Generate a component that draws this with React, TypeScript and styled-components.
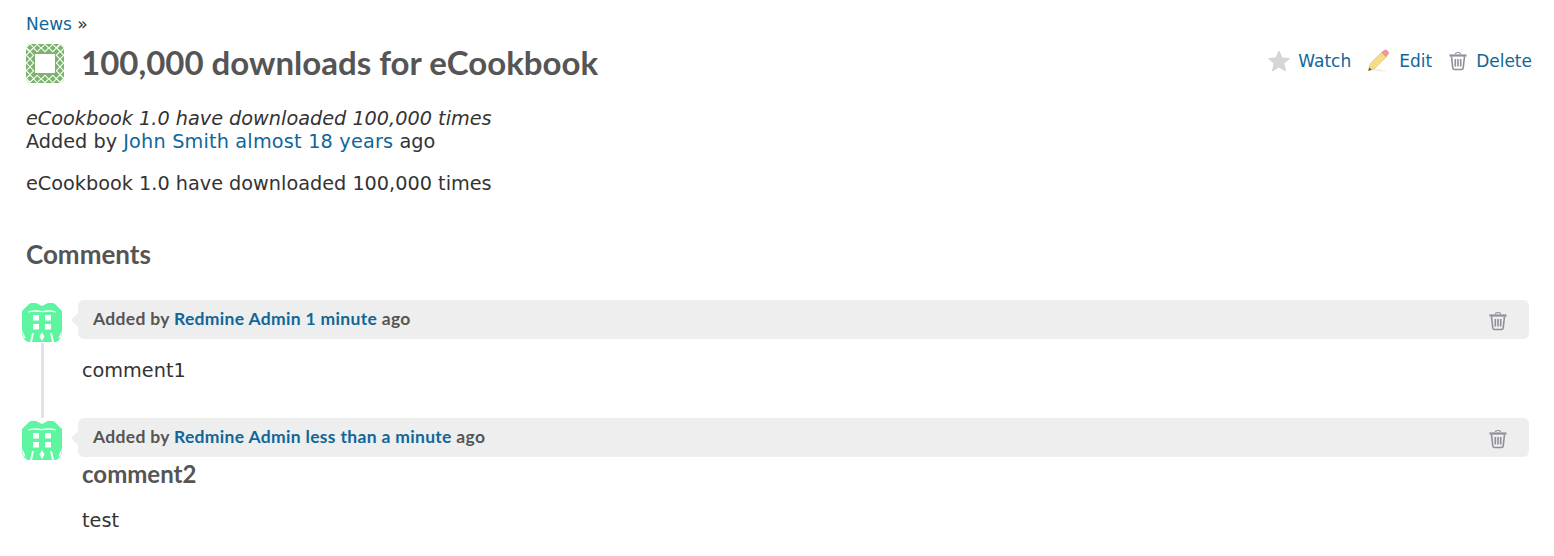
import styled, { createGlobalStyle } from 'styled-components';

const GlobalStyle = createGlobalStyle`
  html, body {
    margin: 0;
    padding: 0;
    background: #fff;
    color: #333;
    font-family: "DejaVu Sans", Verdana, sans-serif;
    font-size: 19.25px;
  }
`;

function IssueAvatar() {
  const dots = [];
  for (let i = 0; i < 5; i++) {
    const p = 3.5 + i * 7.75;
    for (const [x, y] of [[p, 4], [p, 35], [4, p], [34, p]]) {
      dots.push(
        <rect
          key={`${x}-${y}`}
          x={x - 2.6}
          y={y - 2.6}
          width="5.2"
          height="5.2"
          transform={`rotate(45 ${x} ${y})`}
          fill="#7cb36d"
          stroke="#fff"
          strokeWidth="1"
        />,
      );
    }
  }
  return (
    <svg width="38" height="39" viewBox="0 0 38 39">
      <defs>
        <clipPath id="issue-clip">
          <rect width="38" height="39" rx="5" />
        </clipPath>
      </defs>
      <g clipPath="url(#issue-clip)">
        <rect width="38" height="39" fill="#7cb36d" />
        {dots}
        <rect x="9" y="10" width="20" height="19" fill="#fff" />
      </g>
    </svg>
  );
}

function UserAvatar() {
  return (
    <svg width="40" height="40" viewBox="0 0 40 40">
      <path d="M6 0 H34 Q39 1 40 6 V31 Q39 37 34 39 H6 Q1 37 0 31 V6 Q1 1 6 0 Z" fill="#5ef5a0" />
      <path d="M0 8 L7 1 L9 0 H4 L0 4 Z M40 8 L33 1 L31 0 H36 L40 4 Z" fill="#fff" />
      <path d="M14 0 L20 3 L26 0 Z" fill="#fff" />
      <path d="M6 8.5 Q12 6.5 20 8 Q28 6.5 34 8.5 L34 9.5 Q28 8 20 9.3 Q12 8 6 9.5 Z" fill="#fff" />
      <rect x="11" y="12" width="6" height="5.5" fill="#fff" />
      <rect x="23" y="12" width="6" height="5.5" fill="#fff" />
      <rect x="11" y="21" width="6" height="5.5" fill="#fff" />
      <rect x="23" y="21" width="6" height="5.5" fill="#fff" />
      <path d="M20 29 L22.5 33.5 L20 38 L17.5 33.5 Z" fill="#fff" />
      <path d="M10 30 L12 30 L10 39 L8 39 Z M30 30 L28 30 L30 39 L32 39 Z" fill="#fff" />
      <path d="M0 27 L4 36 L1 34 Z M40 27 L36 36 L39 34 Z" fill="#fff" />
    </svg>
  );
}

function StarIcon() {
  return (
    <svg width="22" height="22" viewBox="0 0 22 22">
      <path d="M11 1 L14 8 L21.5 8.6 L15.8 13.4 L17.6 21 L11 17 L4.4 21 L6.2 13.4 L.5 8.6 L8 8 Z" fill="#d6d6d6" stroke="#c4c4c4" strokeWidth="0.6" />
    </svg>
  );
}

function PencilIcon() {
  return (
    <svg width="24" height="24" viewBox="0 0 26 26">
      <path d="M3 23 L9 24 Q18 25 22 24 Q14 21 7 21 Z" fill="#efefef" />
      <path d="M1.5 23.5 L3.5 16 L17 2.5 L22 7.5 L8.5 21 Z" fill="#f5dd85" stroke="#dcc06a" strokeWidth="0.7" />
      <path d="M15.5 4 L18.5 1 Q20 0 21.5 1 L23.5 3 Q24.5 4.5 23 6 L20.5 9 Z" fill="#ee9a9a" />
      <path d="M1.5 23.5 L2.5 20 L5 22.5 Z" fill="#555" />
    </svg>
  );
}

function TrashIcon({ size = 20 }: { size?: number }) {
  return (
    <svg width={size} height={size} viewBox="0 0 20 20" fill="none" stroke="#8f8f9c" strokeWidth="1.6">
      <path d="M1.5 4.5 H18.5" strokeWidth="2.2" />
      <path d="M7.5 3 Q7.5 1.5 10 1.5 Q12.5 1.5 12.5 3" strokeWidth="1.2" />
      <path d="M3.5 5.5 L4.8 17 Q5 18.5 6.5 18.5 H13.5 Q15 18.5 15.2 17 L16.5 5.5" />
      <path d="M7.3 8 V15.5 M10 8 V15.5 M12.7 8 V15.5" />
    </svg>
  );
}

const Page = styled.div`
  padding: 13px 22px 0 26px;
  line-height: 23px;
  box-sizing: border-box;
  height: 556px;
  overflow: hidden;
`;

const Link = styled.a`
  color: #169;
  text-decoration: none;
  cursor: pointer;
`;

const MetaLink = styled(Link)`
  letter-spacing: 0.2px;
`;

const Breadcrumb = styled.div`
  font-size: 17px;
  line-height: 22px;
  color: #333;
`;

const TitleRow = styled.div`
  display: flex;
  align-items: center;
  justify-content: space-between;
  margin-top: 8px;
  height: 39px;
`;

const TitleLeft = styled.div`
  display: flex;
  align-items: center;
  gap: 17px;
`;

const IconWrap = styled.div`
  display: flex;
  margin-top: 2px;
`;

const Title = styled.h2`
  margin: 0;
  font-family: Lato, "DejaVu Sans", sans-serif;
  font-size: 33px;
  font-weight: 700;
  color: #555;
`;

const Actions = styled.div`
  display: flex;
  align-items: center;
  gap: 16px;
  font-size: 17px;
  margin-top: -3px;
`;

const Action = styled(Link)`
  display: flex;
  align-items: center;
  gap: 8px;
`;

const Summary = styled.div`
  margin-top: 25px;
`;

const Paragraph = styled.p`
  margin: 19px 0 0;
`;

const CommentsHeading = styled.h3`
  margin: 44px 0 0;
  font-family: Lato, "DejaVu Sans", sans-serif;
  font-size: 26px;
  line-height: 30px;
  font-weight: 700;
  color: #555;
`;

const Timeline = styled.div`
  margin: 31px 3px 0 -4px;
`;

const Entry = styled.div`
  display: grid;
  grid-template-columns: 40px 1fr;
  column-gap: 16px;
`;

const AvatarColumn = styled.div<{ $hasLine: boolean }>`
  display: flex;
  flex-direction: column;
  align-items: center;
  padding-top: 3px;
  &::after {
    content: '';
    display: ${(p) => (p.$hasLine ? 'block' : 'none')};
    width: 3px;
    flex: 1;
    background: #e3e3e3;
  }
`;

const AvatarBox = styled.div`
  height: 40px;
`;

const EntryHeader = styled.div`
  position: relative;
  display: flex;
  align-items: center;
  justify-content: space-between;
  height: 39px;
  padding: 0 21px 0 15px;
  background: #eee;
  border-radius: 6px;
  font-family: Lato, "DejaVu Sans", sans-serif;
  font-size: 17.5px;
  font-weight: 700;
  letter-spacing: 0.32px;
  color: #555;
  box-sizing: border-box;
  &::before {
    content: '';
    position: absolute;
    left: -7px;
    top: 13px;
    border-style: solid;
    border-width: 7px 7px 7px 0;
    border-color: transparent #eee transparent transparent;
  }
  & > span {
    margin-top: -2px;
  }
  & > svg {
    margin-top: 2px;
  }
`;

const BoldLink = styled(Link)`
  font-weight: 700;
  color: #169;
`;

const EntryBody = styled.div`
  padding-left: 4px;
`;

const CommentText = styled.p`
  margin: 20px 0 36px;
`;

const CommentHeading = styled.h4`
  margin: 5px 0 0;
  font-family: Lato, "DejaVu Sans", sans-serif;
  font-size: 24px;
  line-height: 23px;
  font-weight: 700;
  color: #555;
`;

const CommentFootnote = styled.p`
  margin: 24px 0 0;
`;

export default function App() {
  return (
    <Page>
      <GlobalStyle />
      <Breadcrumb>
        <Link>News</Link> »
      </Breadcrumb>
      <TitleRow>
        <TitleLeft>
          <IconWrap><IssueAvatar /></IconWrap>
          <Title>100,000 downloads for eCookbook</Title>
        </TitleLeft>
        <Actions>
          <Action><StarIcon />Watch</Action>
          <Action><PencilIcon />Edit</Action>
          <Action><TrashIcon />Delete</Action>
        </Actions>
      </TitleRow>
      <Summary>
        <em>eCookbook 1.0 have downloaded 100,000 times</em>
        <br />
        Added by <MetaLink>John Smith</MetaLink> <MetaLink>almost 18 years</MetaLink> ago
      </Summary>
      <Paragraph>eCookbook 1.0 have downloaded 100,000 times</Paragraph>
      <CommentsHeading>Comments</CommentsHeading>
      <Timeline>
        <Entry>
          <AvatarColumn $hasLine>
            <AvatarBox><UserAvatar /></AvatarBox>
          </AvatarColumn>
          <div>
            <EntryHeader>
              <span>Added by <BoldLink>Redmine Admin</BoldLink> <BoldLink>1 minute</BoldLink> ago</span>
              <TrashIcon />
            </EntryHeader>
            <EntryBody>
              <CommentText>comment1</CommentText>
            </EntryBody>
          </div>
        </Entry>
        <Entry>
          <AvatarColumn $hasLine={false}>
            <AvatarBox><UserAvatar /></AvatarBox>
          </AvatarColumn>
          <div>
            <EntryHeader>
              <span>Added by <BoldLink>Redmine Admin</BoldLink> <BoldLink>less than a minute</BoldLink> ago</span>
              <TrashIcon />
            </EntryHeader>
            <EntryBody>
              <CommentHeading>comment2</CommentHeading>
              <CommentFootnote>test</CommentFootnote>
            </EntryBody>
          </div>
        </Entry>
      </Timeline>
    </Page>
  );
}
